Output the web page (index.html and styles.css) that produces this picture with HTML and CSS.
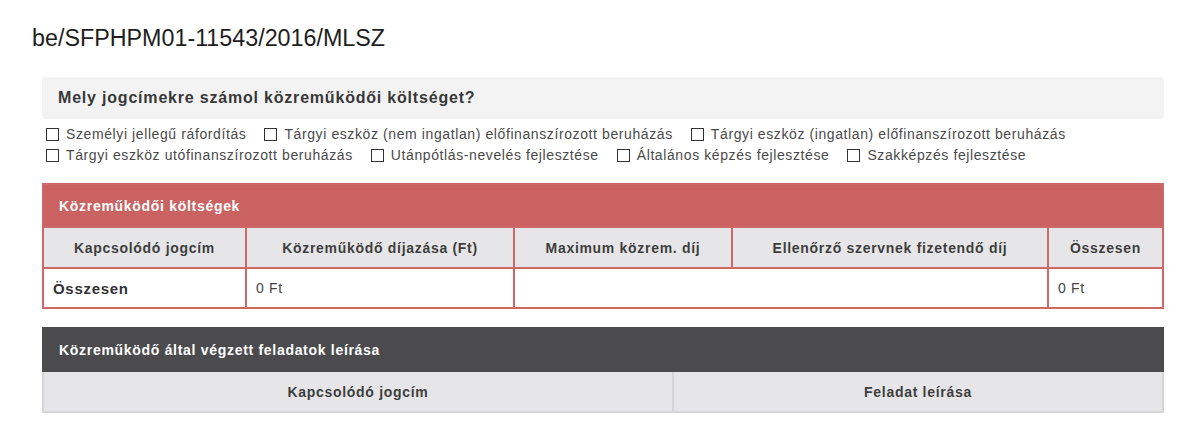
FILE: index.html
```html
<!DOCTYPE html>
<html>
<head>
    <meta name="viewport" content="width=device-width, initial-scale=1.0">
    <link rel="stylesheet" href="styles.css">
</head>
<body>
    <h1 class="doc-id">be/SFPHPM01-11543/2016/MLSZ</h1>

    <div class="form">
        <div class="question">Mely jogcímekre számol közreműködői költséget?</div>

        <div class="options">
            <label class="option"><span class="box"></span>Személyi jellegű ráfordítás</label>
            <label class="option"><span class="box"></span>Tárgyi eszköz (nem ingatlan) előfinanszírozott beruházás</label>
            <label class="option"><span class="box"></span>Tárgyi eszköz (ingatlan) előfinanszírozott beruházás</label>
            <label class="option"><span class="box"></span>Tárgyi eszköz utófinanszírozott beruházás</label>
            <label class="option"><span class="box"></span>Utánpótlás-nevelés fejlesztése</label>
            <label class="option"><span class="box"></span>Általános képzés fejlesztése</label>
            <label class="option"><span class="box"></span>Szakképzés fejlesztése</label>
        </div>

        <table class="data-table red">
            <colgroup>
                <col style="width: 203px">
                <col style="width: 268px">
                <col style="width: 218px">
                <col style="width: 316px">
                <col>
            </colgroup>
            <tr class="caption-row">
                <th colspan="5">Közreműködői költségek</th>
            </tr>
            <tr class="head-row">
                <th>Kapcsolódó jogcím</th>
                <th>Közreműködő díjazása (Ft)</th>
                <th>Maximum közrem. díj</th>
                <th>Ellenőrző szervnek fizetendő díj</th>
                <th>Összesen</th>
            </tr>
            <tr class="body-row">
                <td class="label">Összesen</td>
                <td>0 Ft</td>
                <td colspan="2"></td>
                <td>0 Ft</td>
            </tr>
        </table>

        <table class="data-table dark">
            <colgroup>
                <col style="width: 630px">
                <col>
            </colgroup>
            <tr class="caption-row">
                <th colspan="2">Közreműködő által végzett feladatok leírása</th>
            </tr>
            <tr class="head-row">
                <th>Kapcsolódó jogcím</th>
                <th>Feladat leírása</th>
            </tr>
        </table>
    </div>
</body>
</html>
```

FILE: styles.css
```css
* {
    margin: 0;
    padding: 0;
    box-sizing: border-box;
}

body {
    background: white;
    color: #333;
    font-family: "Liberation Sans", Arial, sans-serif;
    padding: 24px 0 0 32px;
}

.doc-id {
    font-size: 23.3px;
    font-weight: normal;
    line-height: 28px;
    color: #1e1e1e;
}

.form {
    width: 1122px;
    margin: 25px 0 0 10px;
}

.question {
    background: #f3f3f3;
    border-radius: 4px;
    height: 42px;
    padding: 0 16px;
    display: flex;
    align-items: center;
    font-size: 16px;
    letter-spacing: 0.8px;
    font-weight: bold;
    color: #383838;
}

.options {
    display: flex;
    flex-wrap: wrap;
    column-gap: 18px;
    padding: 5px 0 0 4px;
    font-size: 14px;
    letter-spacing: 0.6px;
    line-height: 21px;
    color: #4a4a4a;
}

.option {
    display: flex;
    align-items: center;
}

.box {
    width: 13px;
    height: 13px;
    border: 1px solid #333;
    margin-right: 7px;
}

.data-table {
    width: 100%;
    border-collapse: collapse;
    table-layout: fixed;
    font-size: 14px;
    letter-spacing: 0.7px;
}

.data-table th,
.data-table td {
    height: 41px;
    border: 2px solid;
}

.caption-row th {
    text-align: left;
    padding-left: 15px;
    color: white;
    font-weight: bold;
}

.head-row th {
    background: #e6e6e8;
    color: #3e3e3e;
    font-weight: bold;
    text-align: center;
}

.body-row td {
    height: 40px;
    padding-left: 9px;
    color: #444;
}

.body-row td.label {
    font-weight: bold;
    font-size: 15px;
    color: #333;
}

.red {
    margin-top: 17px;
}

.red th,
.red td {
    border-color: #cd6868;
}

.red .caption-row th {
    background: #cb6262;
    height: 43px;
}

.dark {
    margin-top: 18px;
}

.dark th {
    border-color: #d6d6d6;
}

.dark .caption-row th {
    background: #4b4b4d;
    border-color: #4b4b4d;
    height: 43px;
}
```
